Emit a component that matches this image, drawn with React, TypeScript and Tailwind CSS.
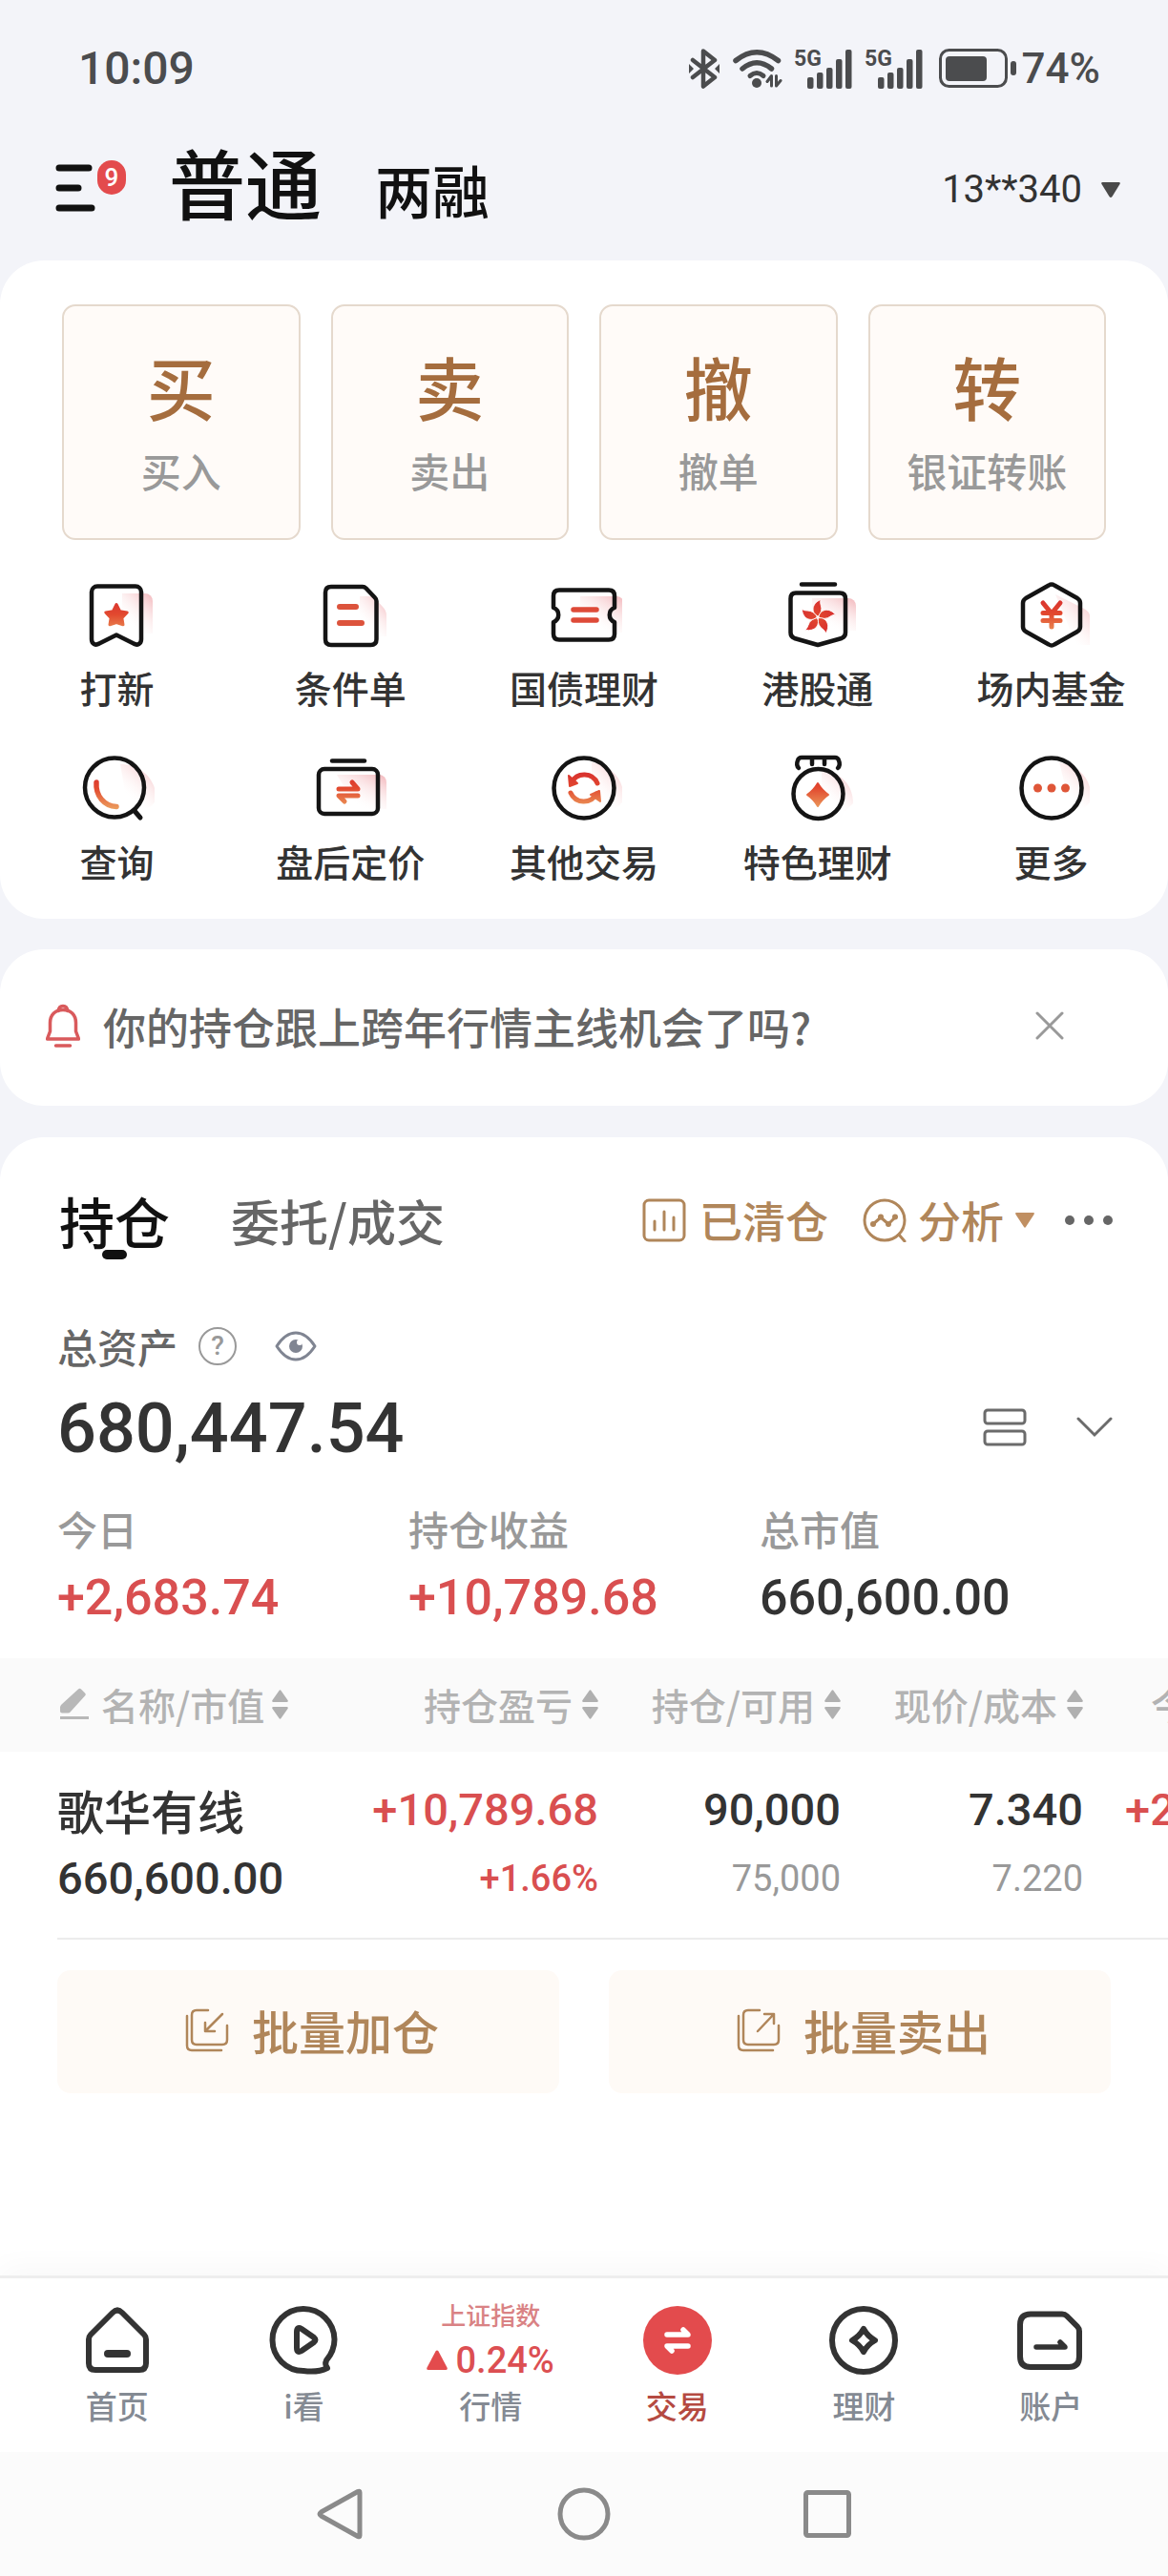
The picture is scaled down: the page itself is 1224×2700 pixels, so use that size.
import { useState } from 'react';
import type { ReactNode } from 'react';

const tradeActions = [
  { char: '买', label: '买入' },
  { char: '卖', label: '卖出' },
  { char: '撤', label: '撤单' },
  { char: '转', label: '银证转账' },
];

const columns = ['持仓盈亏', '持仓/可用', '现价/成本', '今日盈亏'];

const stats = [
  { label: '今日', value: '+2,683.74', up: true },
  { label: '持仓收益', value: '+10,789.68', up: true },
  { label: '总市值', value: '660,600.00', up: false },
];

// Outline icon with a red-orange accent and a soft pink shade behind it
function FeatureIcon({ shade, outline, children }: { shade: string; outline: ReactNode; children: ReactNode }) {
  return (
    <svg viewBox="0 0 80 80" className="h-20 w-20" fill="none" aria-hidden="true">
      <path d={shade} fill="url(#shade)" />
      <g stroke="#141414" strokeWidth="4.5" strokeLinecap="round" strokeLinejoin="round">
        {outline}
      </g>
      {children}
    </svg>
  );
}

function Gradients() {
  return (
    <svg className="absolute h-0 w-0" aria-hidden="true">
      <defs>
        <linearGradient id="shade" x1="1" y1="0.1" x2="0.4" y2="0.9">
          <stop offset="0" stopColor="#f4bfc3" />
          <stop offset="0.75" stopColor="#fdeeee" stopOpacity="0.3" />
          <stop offset="1" stopColor="#ffffff" stopOpacity="0" />
        </linearGradient>
        <linearGradient id="accent" gradientUnits="userSpaceOnUse" x1="40" y1="22" x2="40" y2="60">
          <stop offset="0" stopColor="#d8302f" />
          <stop offset="0.45" stopColor="#e2492f" />
          <stop offset="1" stopColor="#eb9a5c" />
        </linearGradient>
      </defs>
    </svg>
  );
}

const petal = 'M40 39C33.500 36 32.500 26 43 21.500C41.500 26 45 29 43.500 33.500C42.500 36.500 41.500 38 40 39Z';

const features = [
  {
    label: '打新',
    icon: (
      <FeatureIcon
        shade="M46 17h24a8 8 0 0 1 8 8v34H46z"
        outline={<path d="M20 9.5h40a6 6 0 0 1 6 6V65c0 5-4 7-8 4.500L40 60.500 22 69.500C18 72 14 70 14 65V15.500a6 6 0 0 1 6-6z" />}
      >
        <path
          d="M40 28.500l3.600 7.200 7.600 1.200-5.400 5.700 1.200 7.200L40 47.500l-7 2.300 1.200-7.200-5.400-5.700 7.600-1.200z"
          fill="url(#accent)"
          stroke="url(#accent)"
          strokeWidth="3"
          strokeLinejoin="round"
        />
      </FeatureIcon>
    ),
  },
  {
    label: '条件单',
    icon: (
      <FeatureIcon
        shade="M50 20h14l10 11q4 4 4 9v22H50z"
        outline={<path d="M20 10h33q2 0 3.500 1.500L66 21.500q1.500 1.500 1.500 3.500V65q0 6-6 6H20q-6 0-6-6V16q0-6 6-6z" />}
      >
        <path d="M29 31h17M29 48h23" stroke="#dc533c" strokeWidth="6" strokeLinecap="round" />
      </FeatureIcon>
    ),
  },
  {
    label: '国债理财',
    icon: (
      <FeatureIcon
        shade="M36 20h38a8 8 0 0 1 8 8v30H36z"
        outline={<path d="M14 13.500h52q6 0 6 6V32a8 8 0 0 0 0 15v12.500q0 6-6 6H14q-6 0-6-6V47a8 8 0 0 0 0-15V19.500q0-6 6-6z" />}
      >
        <path d="M29 34h24M29 45h24" stroke="#de4a38" strokeWidth="5.500" strokeLinecap="round" />
      </FeatureIcon>
    ),
  },
  {
    label: '港股通',
    icon: (
      <FeatureIcon
        shade="M34 22h38a8 8 0 0 1 8 8v26H34z"
        outline={<path d="M23 7.500h35M17 16.500h46q6 0 6 6V58q0 4.500-4 6L40 71 15.500 64q-4-1.500-4-6V22.500q0-6 5.500-6z" />}
      >
        <g fill="url(#accent)" stroke="#fff" strokeWidth="0.8" transform="translate(0 2)">
          <path d={petal} />
          <path d={petal} transform="rotate(72 40 40)" />
          <path d={petal} transform="rotate(144 40 40)" />
          <path d={petal} transform="rotate(216 40 40)" />
          <path d={petal} transform="rotate(288 40 40)" />
        </g>
      </FeatureIcon>
    ),
  },
  {
    label: '场内基金',
    icon: (
      <FeatureIcon
        shade="M44 18l30 15q6 3 6 8v30H66z"
        outline={<path d="M37 8.500q3-2 6 0L67 22q3 2 3 5v25q0 3-3 5L43 70.500q-3 2-6 0L13 57q-3-2-3-5V27q0-3 3-5z" />}
      >
        <path d="M31 27l9 11 9-11M40 38v14M31 37.500h18M31 45.500h18" stroke="url(#accent)" strokeWidth="5" strokeLinecap="round" />
      </FeatureIcon>
    ),
  },
  {
    label: '查询',
    icon: (
      <FeatureIcon
        shade="M44 14c22 0 38 16 38 38l-8 8H52z"
        outline={
          <>
            <circle cx="38" cy="38.500" r="31" />
            <path d="M59 63l6 7" strokeWidth="5" />
          </>
        }
      >
        <path d="M19 33c-1 14 8 25 21 25.500" stroke="url(#accent)" strokeWidth="5.500" strokeLinecap="round" />
      </FeatureIcon>
    ),
  },
  {
    label: '盘后定价',
    icon: (
      <FeatureIcon
        shade="M26 25h44a8 8 0 0 1 8 8v28H48z"
        outline={
          <>
            <path d="M21 10.500h34" />
            <rect x="7" y="19" width="62" height="47" rx="6" />
          </>
        }
      >
        <path d="M28 40h20L42 33M48 47H28l6 6" stroke="url(#accent)" strokeWidth="5" strokeLinecap="round" strokeLinejoin="round" />
      </FeatureIcon>
    ),
  },
  {
    label: '其他交易',
    icon: (
      <FeatureIcon shade="M48 12c22 4 34 18 34 40l-8 8H48z" outline={<circle cx="40" cy="39" r="31.500" />}>
        <path d="M27 33a15 15 0 0 1 27 1M53 45a15 15 0 0 1-27-1" stroke="url(#accent)" strokeWidth="5" strokeLinecap="round" />
        <path d="M24 26l1 11 8-3zM57 53l-1-11-9 4z" fill="url(#accent)" stroke="url(#accent)" strokeWidth="2" strokeLinejoin="round" />
      </FeatureIcon>
    ),
  },
  {
    label: '特色理财',
    icon: (
      <FeatureIcon
        shade="M44 20c20 2 33 16 33 35l-8 8H44z"
        outline={
          <>
            <path d="M20 18q-3-3-1-8 1-3 4-3h35q3 0 4 3 2 5-1 8M34 8v6M47 8v6" />
            <circle cx="40.500" cy="45" r="26" />
          </>
        }
      >
        <path d="M40 34Q44 41 51 46Q44 51 40 58Q36 51 29 46Q36 41 40 34z" fill="url(#accent)" stroke="url(#accent)" strokeWidth="2" strokeLinejoin="round" />
      </FeatureIcon>
    ),
  },
  {
    label: '更多',
    icon: (
      <FeatureIcon shade="M48 12c22 4 34 18 34 40l-8 8H60z" outline={<circle cx="40" cy="39" r="31.500" />}>
        <g fill="#df5638">
          <circle cx="25.500" cy="39" r="4.500" />
          <circle cx="40" cy="39" r="4.500" />
          <circle cx="54.500" cy="39" r="4.500" />
        </g>
      </FeatureIcon>
    ),
  },
];

function Signal() {
  return (
    <svg viewBox="0 0 62 42" className="h-[42px] w-[62px]" fill="#4b4c4e" aria-label="5G">
      <text x="0" y="18" className="font-[Roboto] text-[23px] font-bold">5G</text>
      <rect x="14" y="30" width="6.500" height="12" rx="2" />
      <rect x="24" y="25" width="6.500" height="17" rx="2" />
      <rect x="34" y="20" width="6.500" height="22" rx="2" />
      <rect x="44" y="11" width="6.500" height="31" rx="2" />
      <rect x="54" y="1" width="6.500" height="41" rx="2" />
    </svg>
  );
}

function StatusBar() {
  return (
    <div className="flex h-[140px] items-center justify-between pt-1 pr-[71px] pl-[82px] font-[Roboto] font-medium text-[#4b4c4e]">
      <span className="text-[48px] leading-none">10:09</span>
      <div className="flex items-center">
        <svg viewBox="0 0 32 42" className="mr-[14px] h-[42px] w-8" fill="none" stroke="#4b4c4e" strokeWidth="4.500" strokeLinecap="round" strokeLinejoin="round" aria-label="蓝牙">
          <path d="M4 12l23 18-12 9.500V2.500L27 12 4 30" />
          <path d="M0 16l5 5-5 5zM32 16l-5 5 5 5z" fill="#4b4c4e" stroke="none" />
        </svg>
        <svg viewBox="0 0 52 42" className="mr-3 h-[42px] w-[52px]" fill="none" stroke="#4b4c4e" strokeLinecap="round" aria-label="无线网络">
          <path d="M3 12.500Q25-5 47.500 12.500" strokeWidth="5.500" />
          <path d="M10 21Q25 8.500 40.500 21" strokeWidth="5.500" />
          <path d="M18 28.500Q25 22.500 32 28.500" strokeWidth="5" />
          <circle cx="25" cy="36" r="5" fill="#4b4c4e" stroke="none" />
          <path d="M40.500 39V28.500l-4.500 6M45.500 28.500V39l4.500-5.500" strokeWidth="3" strokeLinejoin="round" />
        </svg>
        <span className="mr-3"><Signal /></span>
        <span className="mr-4"><Signal /></span>
        <svg viewBox="0 0 82 42" className="mr-[5px] h-[42px] w-[82px]" aria-label="电池">
          <rect x="1.500" y="1.500" width="69" height="38" rx="9" fill="none" stroke="#4b4c4e" strokeWidth="3" />
          <rect x="7" y="8" width="43" height="26" rx="4" fill="#4b4c4e" />
          <rect x="75" y="13" width="6" height="15" rx="3" fill="#4b4c4e" />
        </svg>
        <span className="text-[44px] leading-none">74%</span>
      </div>
    </div>
  );
}

function Header() {
  return (
    <header className="flex h-[133px] items-center pr-[50px] pb-5 pl-[58px]">
      <button className="relative mr-[75px]" aria-label="菜单">
        <svg viewBox="0 0 44 50" className="h-[50px] w-11" stroke="#111" strokeWidth="7" strokeLinecap="round">
          <path d="M4 4h31M4 25h20M4 46h34" />
        </svg>
        <span className="absolute -top-1 left-11 flex h-9 w-[30px] items-center justify-center rounded-full bg-[#e34b4d] font-[Roboto] text-[26px] leading-none font-medium text-white">
          9
        </span>
      </button>
      <div className="flex items-baseline gap-14 pb-4 font-medium text-[#111]">
        <button className="text-[80px] leading-none">普通</button>
        <button className="text-[60px] leading-none">两融</button>
      </div>
      <button className="ml-auto flex items-center gap-5 pt-1 font-[Roboto] text-[40px] leading-none text-[#333]">
        13**340
        <svg viewBox="0 0 20 16" className="h-4 w-5" fill="#4a4a4a" aria-hidden="true">
          <path d="M1.500 0h17q2 0 1 2L11.500 15q-1.500 2-3 0L.5 2q-1-2 1-2z" />
        </svg>
      </button>
    </header>
  );
}

function SortIcon() {
  return (
    <svg viewBox="0 0 17 31" className="h-[31px] w-[17px]" fill="#b0b0b0" aria-hidden="true">
      <path d="M7.500 1q1-1.500 2 0l7 10q1 2-1 2h-14q-2 0-1-2zM7.500 30q1 1.500 2 0l7-10q1-2-1-2h-14q-2 0-1 2z" />
    </svg>
  );
}

function Holdings() {
  return (
    <div className="overflow-hidden">
      <table className="w-[1389px] table-fixed border-collapse">
        <colgroup>
          <col className="w-[373px]" />
          <col className="w-[254px]" />
          <col className="w-[254px]" />
          <col className="w-[254px]" />
          <col className="w-[254px]" />
        </colgroup>
        <thead className="bg-[#fafafa] text-[39px] leading-[40px] text-[#b3b3b3]">
          <tr>
            <th className="pt-7 pb-[30px] pl-[62px] font-medium">
              <button className="flex items-center gap-2">
                <svg viewBox="0 0 32 34" className="mr-1 h-[34px] w-8" fill="#b8b8b8" aria-hidden="true">
                  <path d="M20 1.500q1.500-1.500 3 0l4 4q1.500 1.500 0 3L12 25q-1 1.500-3 1.500H3q-2 0-2-2v-4q0-1.500 1.500-3zM1 30h30v3H1z" />
                </svg>
                名称/市值
                <SortIcon />
              </button>
            </th>
            {columns.map((name) => (
              <th key={name} className="pt-7 pb-[30px] font-medium">
                <button className="ml-auto flex items-center gap-[10px] whitespace-nowrap">
                  {name}
                  <SortIcon />
                </button>
              </th>
            ))}
          </tr>
        </thead>
        <tbody className="text-right font-[Roboto] text-[47px] leading-[72px] font-medium text-[#333]">
          <tr>
            <td className="pt-[25px] pb-[26px] pl-[60px] text-left">
              <div className="font-['Noto_Sans_CJK_SC'] text-[49px]">歌华有线</div>
              <div>660,600.00</div>
            </td>
            <td className="pt-[25px] pb-[26px] text-[#d94f50]">
              <div>+10,789.68</div>
              <div className="text-[38px]">+1.66%</div>
            </td>
            <td className="pt-[25px] pb-[26px]">
              <div>90,000</div>
              <div className="text-[38px] font-normal text-[#999]">75,000</div>
            </td>
            <td className="pt-[25px] pb-[26px]">
              <div>7.340</div>
              <div className="text-[38px] font-normal text-[#999]">7.220</div>
            </td>
            <td className="pt-[25px] pb-[26px] align-top text-[#d94f50]">+2,683.74</td>
          </tr>
        </tbody>
      </table>
      <hr className="ml-[60px] border-t-2 border-[#ececec]" />
    </div>
  );
}

const navItems = [
  {
    label: '首页',
    icon: (
      <g stroke="#333" strokeWidth="6">
        <path d="M35 11q5-5 10 0l23 23q2 2 2 5v25q0 7-7 7H17q-7 0-7-7V39q0-3 2-5z" />
        <path d="M30 54h20" strokeWidth="8" />
      </g>
    ),
  },
  {
    label: 'i看',
    icon: (
      <g stroke="#333" strokeWidth="6">
        <path d="M64 61C70 54 72.500 47 72.500 39A32.500 32.500 0 1 0 40 72q15 2 25-3-3-4-1-8z" />
        <path d="M33 31q0-6 5-3l13 9q3 2.500 0 5l-13 9q-5 3-5-3z" />
      </g>
    ),
  },
  { label: '行情', icon: null },
  {
    label: '交易',
    active: true,
    icon: (
      <>
        <circle cx="40" cy="40" r="36" fill="#e34b4d" />
        <path d="M29 34h22L46 29M51 46H29l5 5" stroke="#fff" strokeWidth="5.500" />
      </>
    ),
  },
  {
    label: '理财',
    icon: (
      <g stroke="#333" strokeWidth="6">
        <circle cx="40" cy="40" r="33" />
        <path d="M40 28Q44 35.500 52 40Q44 44.500 40 52Q36 44.500 28 40Q36 35.500 40 28z" />
      </g>
    ),
  },
  {
    label: '账户',
    icon: (
      <g stroke="#333" strokeWidth="6">
        <path d="M19 12.500h33q3 0 5 2l11 11q2 2 2 5V57q0 11-11 11H19Q8 68 8 57V23.500Q8 12.500 19 12.500z" />
        <path d="M25 47h30L50 42" strokeWidth="5.500" />
      </g>
    ),
  },
];

function BottomNav() {
  return (
    <nav className="grid grid-cols-6 border-t-[3px] border-[#eee] bg-white px-[25px] pt-[25px] pb-8 shadow-[0_-8px_30px_rgba(0,0,0,0.03)]">
      {navItems.map((item) => (
        <a
          key={item.label}
          href="#"
          className={`flex flex-col items-center gap-3 text-[33px] leading-[33px] font-medium ${item.active ? 'text-[#b54a41]' : 'text-[#848a93]'}`}
        >
          {item.icon ? (
            <svg viewBox="0 0 80 80" className="h-20 w-20" fill="none" strokeLinecap="round" strokeLinejoin="round" aria-hidden="true">
              {item.icon}
            </svg>
          ) : (
            <span className="flex h-20 flex-col items-center justify-between text-[#dc4f52]">
              <span className="text-[26px] leading-[26px] text-[#d98284]">上证指数</span>
              <span className="flex items-center gap-2 font-[Roboto] text-[38px] leading-[38px]">
                <svg viewBox="0 0 22 22" className="h-[22px] w-[22px]" fill="#e34b4d" aria-hidden="true">
                  <path d="M9.500 1.500q1.500-2 3 0l9 17q1 2.500-1.500 2.500H2q-2.500 0-1.500-2.500z" />
                </svg>
                0.24%
              </span>
            </span>
          )}
          {item.label}
        </a>
      ))}
    </nav>
  );
}

function SystemNav() {
  return (
    <div className="flex justify-center gap-[195px] bg-[#fbfbfb] py-[35px]">
      <button aria-label="返回">
        <svg viewBox="0 0 60 60" className="h-[60px] w-[60px]" fill="none" stroke="#8a8a8a" strokeWidth="5" strokeLinejoin="round">
          <path d="M50 7.500v45q0 2-2 1L9.500 32q-3-2 0-4L48 6.500q2-1 2 1z" />
        </svg>
      </button>
      <button aria-label="主页">
        <svg viewBox="0 0 60 60" className="h-[60px] w-[60px]" fill="none" stroke="#8a8a8a" strokeWidth="5">
          <circle cx="30" cy="30" r="25" />
        </svg>
      </button>
      <button aria-label="最近任务">
        <svg viewBox="0 0 60 60" className="h-[60px] w-[60px]" fill="none" stroke="#8a8a8a" strokeWidth="5">
          <rect x="7.500" y="7.500" width="45" height="45" rx="2" />
        </svg>
      </button>
    </div>
  );
}

export default function App() {
  const [noticeOpen, setNoticeOpen] = useState(true);

  return (
    <div className="flex min-h-screen flex-col overflow-x-hidden bg-[#f3f4f9] font-['Noto_Sans_CJK_SC',sans-serif]">
      <Gradients />
      <StatusBar />
      <Header />

      <section className="rounded-[46px] bg-white pt-[46px] pb-[41px]">
        <div className="grid grid-cols-4 gap-8 px-[65px]">
          {tradeActions.map((action) => (
            <button
              key={action.char}
              className="flex flex-col items-center gap-8 rounded-[14px] border-2 border-[#e5d9cd] bg-[#fffbf8] pt-[47px] pb-[50px] font-medium"
            >
              <span className="text-[72px] leading-[72px] text-[#a56d3e]">{action.char}</span>
              <span className="text-[42px] leading-[42px] text-[#999]">{action.label}</span>
            </button>
          ))}
        </div>
        <div className="mt-[39px] grid grid-cols-5 gap-y-[47px]">
          {features.map((item) => (
            <button key={item.label} className="flex flex-col items-center gap-[15px] text-[39px] leading-[40px] font-medium whitespace-nowrap text-[#333]">
              {item.icon}
              {item.label}
            </button>
          ))}
        </div>
      </section>

      {noticeOpen && (
        <section className="mt-8 flex items-center gap-6 rounded-[46px] bg-white pt-[57px] pb-[61px] pr-[109px] pl-12 text-[45px] leading-[45px] font-medium text-[#666]">
          <svg viewBox="0 0 36 46" className="h-[46px] w-9" fill="none" stroke="#d95a5c" strokeWidth="3.500" strokeLinecap="round" strokeLinejoin="round" aria-hidden="true">
            <path d="M13.500 7.500q0-5 4.500-5t4.500 5M4.500 20c0-8 5-13.500 13.500-13.500S31.500 12 31.500 20v9l3 8h-33l3-8zM10.500 44h15" />
          </svg>
          <span>你的持仓跟上跨年行情主线机会了吗?</span>
          <button className="ml-auto" aria-label="关闭" onClick={() => setNoticeOpen(false)}>
            <svg viewBox="0 0 30 30" className="h-[30px] w-[30px]" stroke="#999" strokeWidth="3" strokeLinecap="round">
              <path d="M2 2l26 26M28 2L2 28" />
            </svg>
          </button>
        </section>
      )}

      <main className="mt-[33px] flex-1 rounded-t-[46px] bg-white pt-[57px] pb-8">
        <div className="flex h-[60px] items-center pr-[58px] pl-[62px] font-medium text-[#666]">
          <button className="relative mr-16 text-[58px] leading-[60px] text-[#111]">
            持仓
            <span className="absolute -bottom-[11px] left-1/2 h-[10px] w-[26px] -translate-x-1/2 rounded-full bg-[#111]" />
          </button>
          <button className="text-[51px] leading-[60px]">委托/成交</button>
          <div className="ml-auto flex items-center text-[45px] leading-[60px] text-[#b0865a]">
            <button className="mr-9 flex items-center gap-[14px]">
              <svg viewBox="0 0 46 46" className="h-[46px] w-[46px]" fill="none" stroke="currentColor" strokeWidth="3" strokeLinecap="round" aria-hidden="true">
                <rect x="2" y="2" width="42" height="42" rx="5" />
                <path d="M13 24v9M23 14v19M33 20v13" />
              </svg>
              已清仓
            </button>
            <button className="mr-8 flex items-center gap-3">
              <svg viewBox="0 0 46 46" className="h-[46px] w-[46px]" fill="none" stroke="currentColor" strokeWidth="3" strokeLinecap="round" strokeLinejoin="round" aria-hidden="true">
                <circle cx="23" cy="23" r="21" />
                <path d="M38 38l6 7M11 27l8-7 8 7 7-7" />
                <g fill="currentColor" stroke="none">
                  <circle cx="11" cy="27" r="3" />
                  <circle cx="19" cy="19.500" r="3" />
                  <circle cx="27" cy="27" r="3" />
                  <circle cx="34" cy="19.500" r="3" />
                </g>
              </svg>
              分析
              <svg viewBox="0 0 20 16" className="h-4 w-5" fill="#c08f62" aria-hidden="true">
                <path d="M1 0h18q1.500 0 .5 2L11 15q-1 1.500-2 0L.5 2Q-.5 0 1 0z" />
              </svg>
            </button>
            <button aria-label="更多操作">
              <svg viewBox="0 0 50 12" className="h-3 w-[50px]" fill="#666">
                <circle cx="5" cy="6" r="5" />
                <circle cx="25" cy="6" r="5" />
                <circle cx="45" cy="6" r="5" />
              </svg>
            </button>
          </div>
        </div>

        <div className="mt-[81px] flex items-center pl-[60px] text-[42px] leading-[42px] font-medium text-[#666]">
          总资产
          <button className="ml-[22px] flex h-10 w-10 items-center justify-center rounded-full border-2 border-[#999] font-[Roboto] text-[28px] leading-none text-[#999]" aria-label="总资产说明">
            ?
          </button>
          <button className="ml-10" aria-label="隐藏金额">
            <svg viewBox="0 0 44 32" className="h-8 w-11" fill="none" stroke="#808592" strokeWidth="3">
              <path d="M2 16Q11 2 22 2t20 14Q33 30 22 30T2 16z" strokeLinejoin="round" />
              <circle cx="22" cy="16" r="7" fill="#808592" stroke="none" />
              <circle cx="26" cy="12" r="3" fill="#fff" stroke="none" />
            </svg>
          </button>
        </div>

        <div className="mt-[30px] flex items-center pr-[58px] pl-[60px]">
          <span className="font-[Roboto] text-[72px] leading-[72px] font-medium text-[#333]">680,447.54</span>
          <div className="ml-auto flex items-center gap-[52px] pb-1">
            <button aria-label="切换视图">
              <svg viewBox="0 0 46 40" className="h-10 w-[46px]" fill="none" stroke="#6b6b6b" strokeWidth="3">
                <rect x="2" y="2" width="42" height="14" rx="3" />
                <rect x="2" y="24" width="42" height="14" rx="3" />
              </svg>
            </button>
            <button aria-label="展开">
              <svg viewBox="0 0 38 22" className="h-[22px] w-[38px]" fill="none" stroke="#6b6b6b" strokeWidth="3" strokeLinecap="round">
                <path d="M2 2l17 17L36 2" />
              </svg>
            </button>
          </div>
        </div>

        <div className="mt-[47px] mb-[37px] grid grid-cols-3 px-[60px] font-medium">
          {stats.map((item) => (
            <div key={item.label} className="flex flex-col gap-[26px]">
              <span className="text-[42px] leading-[42px] text-[#999]">{item.label}</span>
              <span className={`font-[Roboto] text-[52px] leading-[52px] ${item.up ? 'text-[#d94f50]' : 'text-[#333]'}`}>
                {item.value}
              </span>
            </div>
          ))}
        </div>

        <Holdings />

        <div className="mt-8 grid grid-cols-2 gap-[52px] px-[60px] text-[49px] leading-[49px] font-medium text-[#b0865a]">
          <button className="flex items-center justify-center gap-6 rounded-[14px] bg-[#fefaf6] pt-[38px] pb-[42px] pl-2">
            <svg viewBox="0 0 46 46" className="h-[46px] w-[46px]" fill="none" stroke="currentColor" strokeWidth="2.500" strokeLinecap="round" strokeLinejoin="round" aria-hidden="true">
              <path d="M24 2H12q-5 0-5 5v26q0 5 5 5h27q5 0 5-5V18M2 8v31q0 5 5 5h31M39 6L21 24M21 15v9h10" />
            </svg>
            批量加仓
          </button>
          <button className="flex items-center justify-center gap-6 rounded-[14px] bg-[#fefaf6] pt-[38px] pb-[42px] pl-2">
            <svg viewBox="0 0 46 46" className="h-[46px] w-[46px]" fill="none" stroke="currentColor" strokeWidth="2.500" strokeLinecap="round" strokeLinejoin="round" aria-hidden="true">
              <path d="M24 2H12q-5 0-5 5v26q0 5 5 5h27q5 0 5-5V18M2 8v31q0 5 5 5h31M22 24L39 6M29 6h10v10" />
            </svg>
            批量卖出
          </button>
        </div>
      </main>

      <BottomNav />
      <SystemNav />
    </div>
  );
}
